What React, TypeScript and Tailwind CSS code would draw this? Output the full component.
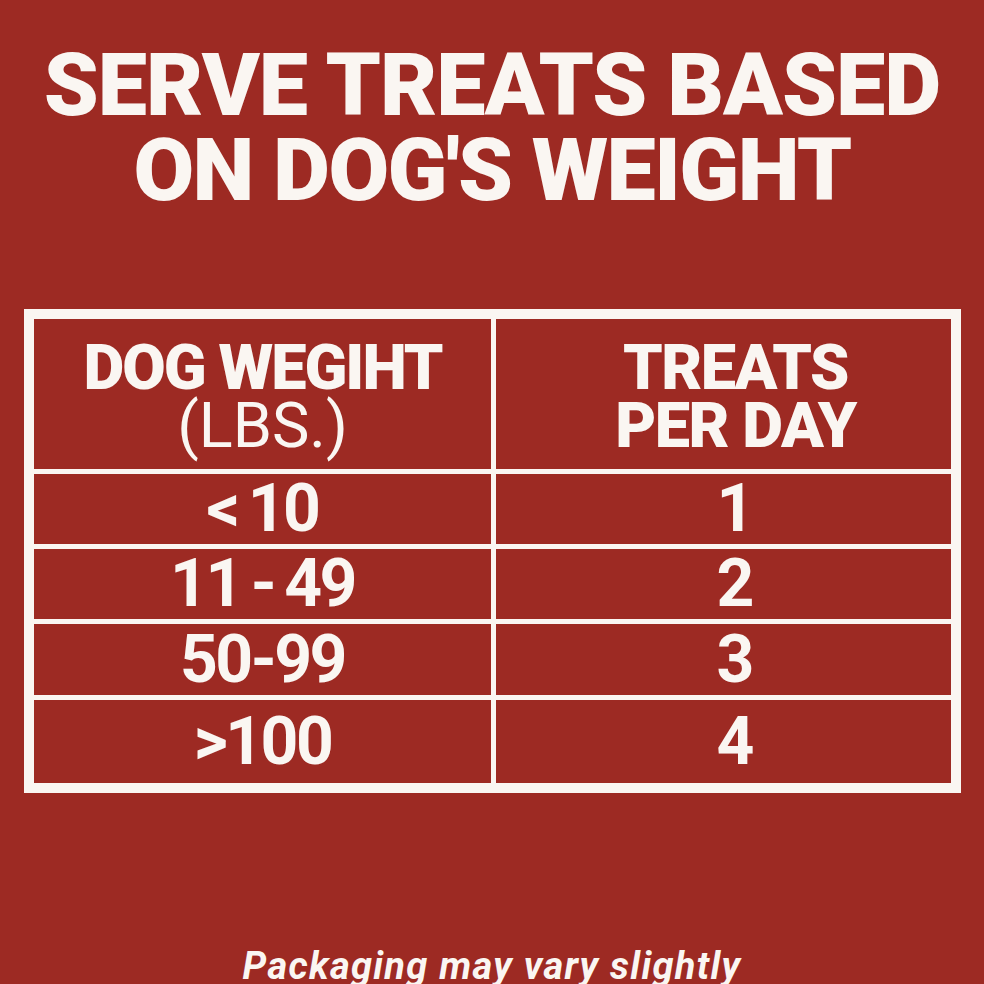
import React from "react";

const rows: [string, string, string][] = [
  ["< 10", "1", "h-[70px]"],
  ["11 - 49", "2", "h-[70px]"],
  ["50-99", "3", "h-[71px]"],
  [">100", "4", "h-[83px]"],
];

export default function App() {
  return (
    <div
      className="w-[984px] h-[984px] overflow-hidden bg-[#9d2a23] text-[#faf6f2] flex flex-col items-center"
      style={{ fontFamily: "Roboto, 'Liberation Sans', sans-serif" }}
    >
      <h1 className="mt-[42px] text-[88px] leading-[85px] font-black text-center tracking-[-1px] uppercase">
        <div>SERVE TREATS BASED</div>
        <div className="tracking-[-1.6px]">ON DOG'S WEIGHT</div>
      </h1>

      <div className="mt-[97px] self-start ml-[24px] bg-[#faf6f2] p-[10px] grid grid-cols-[457px_455px] gap-[5px]">
        <div className="h-[150px] bg-[#9d2a23] flex flex-col items-center pt-[20px] text-[63px] leading-[58px]">
          <div className="font-black tracking-[-2px]">DOG WEGIHT</div>
          <div className="font-normal">(LBS.)</div>
        </div>
        <div className="h-[150px] bg-[#9d2a23] flex flex-col items-center pt-[20px] pl-[24px] text-[63px] leading-[58px] font-black tracking-[-1.5px]">
          <div>TREATS</div>
          <div>PER DAY</div>
        </div>
        {rows.map(([w, t, h]) => (
          <React.Fragment key={w}>
            <div className={`${h} bg-[#9d2a23] flex items-center justify-center text-[66px] leading-[70px] font-bold tracking-[-2.5px] [word-spacing:-4px]`}>
              {w}
            </div>
            <div className={`${h} bg-[#9d2a23] flex items-center justify-center pl-[24px] text-[66px] leading-[70px] font-bold`}>
              {t}
            </div>
          </React.Fragment>
        ))}
      </div>

      <div className="mt-[151px] text-[38px] leading-[44px] font-bold italic text-center tracking-[1.3px]">
        Packaging may vary slightly
      </div>
    </div>
  );
}
